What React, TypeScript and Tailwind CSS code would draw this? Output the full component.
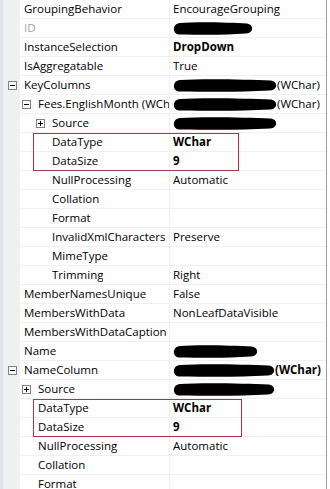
import React from 'react';

type Row = {
  name: string;
  level: 0 | 1 | 2;
  toggle?: '-' | '+';
  value?: string;
  bold?: boolean;
  grey?: boolean;
  blob?: number;
  suffix?: string;
  suffixBold?: boolean;
};

const rows: Row[] = [
  { name: 'GroupingBehavior', level: 0, value: 'EncourageGrouping' },
  { name: 'ID', level: 0, grey: true, blob: 80 },
  { name: 'InstanceSelection', level: 0, value: 'DropDown', bold: true },
  { name: 'IsAggregatable', level: 0, value: 'True' },
  { name: 'KeyColumns', level: 0, toggle: '-', blob: 104, suffix: '(WChar)' },
  { name: 'Fees.EnglishMonth (WChar)', level: 1, toggle: '-', blob: 104, suffix: '(WChar)' },
  { name: 'Source', level: 2, toggle: '+', blob: 104 },
  { name: 'DataType', level: 2, value: 'WChar', bold: true },
  { name: 'DataSize', level: 2, value: '9', bold: true },
  { name: 'NullProcessing', level: 2, value: 'Automatic' },
  { name: 'Collation', level: 2 },
  { name: 'Format', level: 2 },
  { name: 'InvalidXmlCharacters', level: 2, value: 'Preserve' },
  { name: 'MimeType', level: 2 },
  { name: 'Trimming', level: 2, value: 'Right' },
  { name: 'MemberNamesUnique', level: 0, value: 'False' },
  { name: 'MembersWithData', level: 0, value: 'NonLeafDataVisible' },
  { name: 'MembersWithDataCaption', level: 0 },
  { name: 'Name', level: 0, blob: 85 },
  { name: 'NameColumn', level: 0, toggle: '-', blob: 102, suffix: '(WChar)', suffixBold: true },
  { name: 'Source', level: 1, toggle: '+', blob: 102 },
  { name: 'DataType', level: 1, value: 'WChar', bold: true },
  { name: 'DataSize', level: 1, value: '9', bold: true },
  { name: 'NullProcessing', level: 1, value: 'Automatic' },
  { name: 'Collation', level: 1 },
  { name: 'Format', level: 1 },
];

const indent = ['pl-[4px]', 'pl-[18px]', 'pl-[32px]'];

function Toggle({ kind }: { kind: '-' | '+' }) {
  return (
    <svg width="9" height="9" viewBox="0 0 9 9" className="-ml-[16px] mr-[7px] shrink-0">
      <rect x="0.5" y="0.5" width="8" height="8" fill="white" stroke="#808080" />
      <line x1="2" y1="4.5" x2="7" y2="4.5" stroke="#000" />
      {kind === '+' && <line x1="4.5" y1="2" x2="4.5" y2="7" stroke="#000" />}
    </svg>
  );
}

// redacted values: rough marker strokes
function Blob({ width }: { width: number }) {
  const w = width;
  return (
    <svg width={w} height="15" viewBox={`0 0 ${w} 15`} className="shrink-0">
      <path
        d={`M7 2 C ${w * 0.3} 0.5, ${w * 0.7} 1.5, ${w - 6} 2.5 C ${w + 1} 3.5, ${w + 1} 12, ${w - 7} 12.5 C ${w * 0.6} 14.5, ${w * 0.3} 13.5, 6 13.5 C -1 13, -1 2.5, 7 2 Z`}
        fill="#000"
      />
    </svg>
  );
}

export default function App() {
  return (
    <div
      className="relative w-[330px] h-[489px] overflow-hidden bg-white text-[11.5px] text-black"
      style={{ fontFamily: '"Open Sans", "Noto Sans", sans-serif' }}
    >
      <div className="flex h-full">
        <div className="w-[20px] shrink-0 bg-[#f0f0f0] border-l-[3px] border-[#dfe3ea]" />
        <div className="flex-1 flex flex-col">
          {rows.map((r, i) => (
            <div key={i} className="flex h-[19px] shrink-0 border-b border-[#f0f0f0]">
              <div className={`w-[150px] shrink-0 flex items-center border-r border-[#f0f0f0] whitespace-nowrap ${indent[r.level]}`}>
                {r.toggle && <Toggle kind={r.toggle} />}
                <span className={`overflow-hidden ${r.grey ? 'text-[#a0a0a0]' : ''}`}>{r.name}</span>
              </div>
              <div className="flex-1 flex items-center pl-[3px] whitespace-nowrap bg-white">
                {r.blob && <Blob width={r.blob} />}
                {r.suffix && <span className={r.suffixBold ? 'font-bold' : ''}>{r.suffix}</span>}
                {r.value && <span className={r.bold ? 'font-bold' : ''}>{r.value}</span>}
              </div>
            </div>
          ))}
        </div>
        <div className="w-[4px] shrink-0 border-l border-[#a0a0a0] bg-white" />
      </div>
      <div className="absolute left-[33px] top-[133px] w-[206px] h-[38px] border border-[#b0324a]" />
      <div className="absolute left-[33px] top-[399px] w-[209px] h-[38px] border border-[#b0324a]" />
    </div>
  );
}
